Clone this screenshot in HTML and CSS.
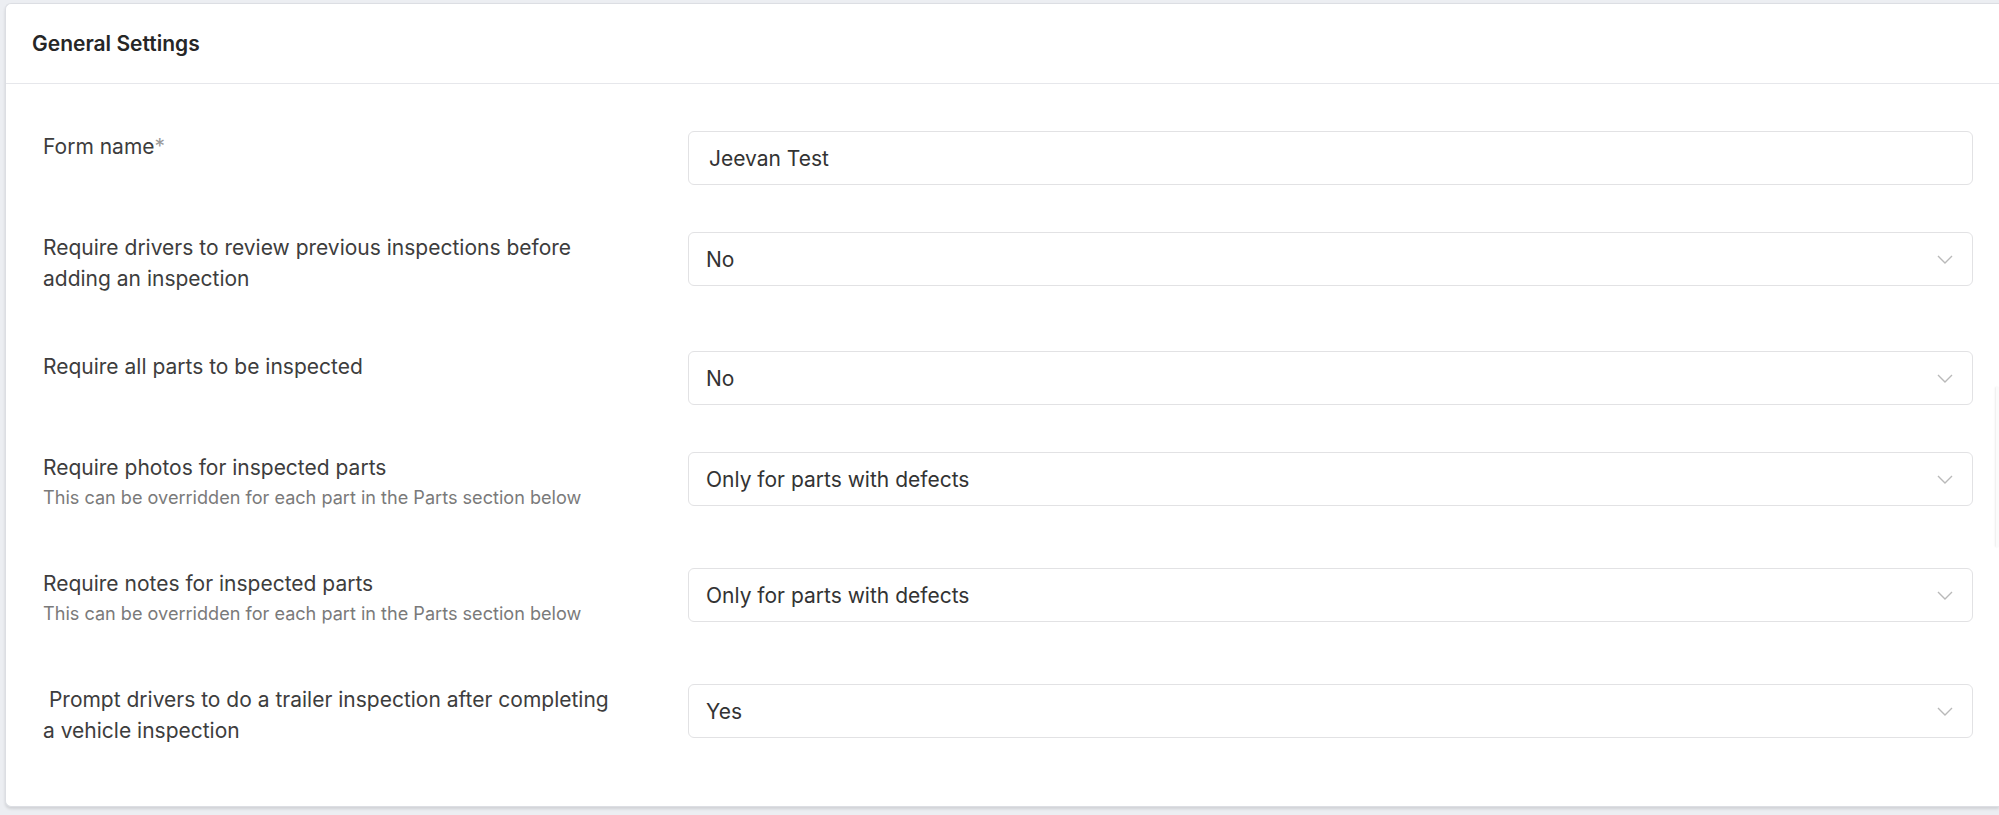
FILE: index.html
```html
<!DOCTYPE html>
<html lang="en">
<head>
<meta charset="utf-8">
<title>General Settings</title>
<link rel="stylesheet" href="styles.css">
</head>
<body>
<div class="page">
  <section class="card">
    <header class="card-header">General Settings</header>
    <div class="card-body">
      <div class="row">
        <div class="label-block"><div class="label">Form name<span class="req">*</span></div></div>
        <div class="field"><div class="control">Jeevan Test</div></div>
      </div>
      <div class="row">
        <div class="label-block"><div class="label">Require drivers to review previous inspections before adding an inspection</div></div>
        <div class="field"><div class="control select"><span>No</span><svg class="chev" viewBox="0 0 16 9" width="16" height="9"><path d="M1 1l7 7 7-7" fill="none" stroke="#b9b9b9" stroke-width="1.4"/></svg></div></div>
      </div>
      <div class="row">
        <div class="label-block"><div class="label">Require all parts to be inspected</div></div>
        <div class="field"><div class="control select"><span>No</span><svg class="chev" viewBox="0 0 16 9" width="16" height="9"><path d="M1 1l7 7 7-7" fill="none" stroke="#b9b9b9" stroke-width="1.4"/></svg></div></div>
      </div>
      <div class="row">
        <div class="label-block"><div class="label">Require photos for inspected parts</div><div class="hint">This can be overridden for each part in the Parts section below</div></div>
        <div class="field"><div class="control select"><span>Only for parts with defects</span><svg class="chev" viewBox="0 0 16 9" width="16" height="9"><path d="M1 1l7 7 7-7" fill="none" stroke="#b9b9b9" stroke-width="1.4"/></svg></div></div>
      </div>
      <div class="row">
        <div class="label-block"><div class="label">Require notes for inspected parts</div><div class="hint">This can be overridden for each part in the Parts section below</div></div>
        <div class="field"><div class="control select"><span>Only for parts with defects</span><svg class="chev" viewBox="0 0 16 9" width="16" height="9"><path d="M1 1l7 7 7-7" fill="none" stroke="#b9b9b9" stroke-width="1.4"/></svg></div></div>
      </div>
      <div class="row">
        <div class="label-block"><div class="label">&nbsp;Prompt drivers to do a trailer inspection after completing a vehicle inspection</div></div>
        <div class="field"><div class="control select"><span>Yes</span><svg class="chev" viewBox="0 0 16 9" width="16" height="9"><path d="M1 1l7 7 7-7" fill="none" stroke="#b9b9b9" stroke-width="1.4"/></svg></div></div>
      </div>
    </div>
  </section>
  <div class="side-tab"></div>
</div>
</body>
</html>
```
FILE: styles.css
```css
html, body {
  margin: 0;
  padding: 0;
  background: #eceef2;
  font-family: Inter, "Noto Sans", "Liberation Sans", sans-serif;
  color: #3a3a3a;
}
.page {
  position: relative;
  width: 1999px;
  height: 815px;
  overflow: hidden;
  padding: 3px 0 0 5px;
  box-sizing: border-box;
}
.card {
  background: #fff;
  border: 1px solid #dcdee3;
  border-right: none;
  border-radius: 6px 0 0 6px;
  box-shadow: 0 2px 3px rgba(0, 0, 0, 0.12);
  height: 804px;
  box-sizing: border-box;
}
.card-header {
  height: 80px;
  box-sizing: border-box;
  padding: 0 0 0 26px;
  display: flex;
  align-items: center;
  font-size: 21px;
  font-weight: 600;
  color: #262626;
  border-bottom: 1px solid #e6e7eb;
}
.card-body {
  padding: 47px 26px 0 37px;
  display: flex;
  flex-direction: column;
  gap: 47px;
}
.row {
  display: grid;
  grid-template-columns: 645px 1fr;
  align-items: start;
}
.label-block {
  padding-bottom: 10px;
}
.label {
  font-size: 21px;
  line-height: 31px;
  color: #3d3d3d;
  max-width: 580px;
}
.req {
  color: #9a9a9a;
}
.hint {
  font-size: 18.1px;
  line-height: 28px;
  color: #7a7a7a;
}
.control {
  height: 54px;
  box-sizing: border-box;
  border: 1px solid #e2e2e4;
  border-radius: 6px;
  display: flex;
  align-items: center;
  justify-content: space-between;
  padding: 0 19px 0 20px;
  font-size: 21px;
  color: #333;
}
.select {
  padding-left: 17px;
}
.chev {
  display: block;
}
.side-tab {
  position: absolute;
  left: 1996px;
  top: 387px;
  width: 3px;
  height: 160px;
  background: #fbfbfb;
  box-shadow: -1px 0 2px rgba(0, 0, 0, 0.08);
}
```
